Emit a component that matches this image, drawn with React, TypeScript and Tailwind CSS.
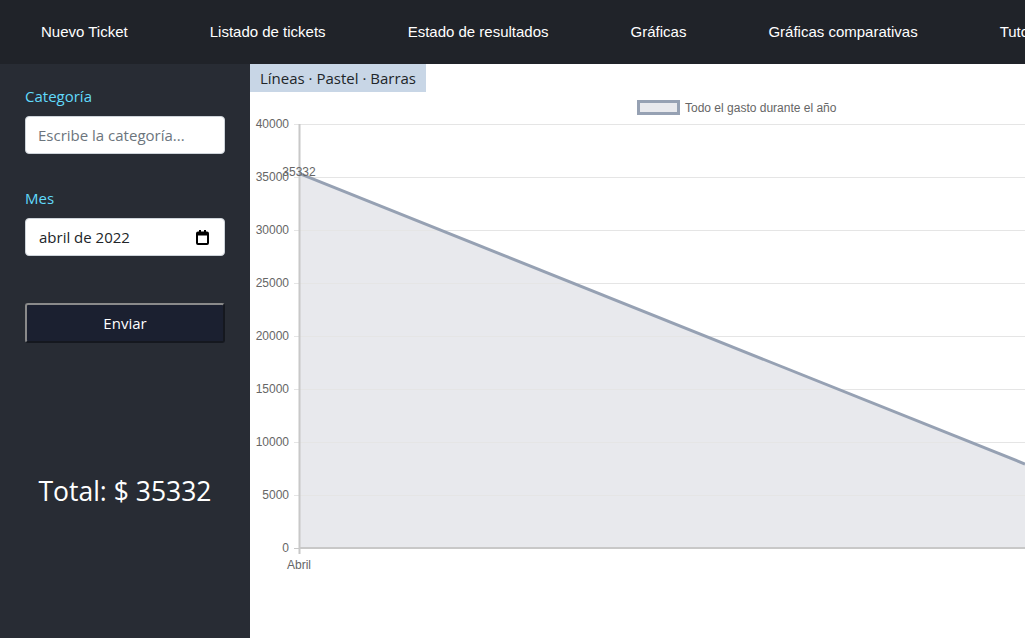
import React from "react";

const navItems = [
  "Nuevo Ticket",
  "Listado de tickets",
  "Estado de resultados",
  "Gráficas",
  "Gráficas comparativas",
  "Tutoriales",
];

function Chart() {
  const x0 = 49;
  const yTop = 32;
  const yBottom = 456;
  const ticks = [40000, 35000, 30000, 25000, 20000, 15000, 10000, 5000, 0];
  const yOf = (v: number) => yBottom - (v / 40000) * (yBottom - yTop);
  const p1y = yOf(35332);
  const p2x = 775;
  const p2y = 372;
  return (
    <svg width="775" height="546" className="block" style={{ fontFamily: '"Liberation Sans", Arial, sans-serif' }}>
      <rect x="388.5" y="9.5" width="40" height="12" fill="#e8e9ed" stroke="#96a1b3" strokeWidth="3" />
      <text x="435" y="19.5" fontSize="12" fill="#666">Todo el gasto durante el año</text>
      <polygon points={`${x0},${p1y} ${p2x},${p2y} ${p2x},${yBottom} ${x0},${yBottom}`} fill="#e8e9ed" />
      {ticks.map((t) => (
        <g key={t}>
          <line x1={x0 - 5} x2={775} y1={yOf(t) + 0.5} y2={yOf(t) + 0.5} stroke={t === 0 ? "#c8c8c8" : "#e5e5e5"} strokeWidth="1" />
          <text x={x0 - 10} y={yOf(t) + 4} fontSize="12" fill="#666" textAnchor="end">{t}</text>
        </g>
      ))}
      <line x1={x0 + 0.5} x2={x0 + 0.5} y1={yTop} y2={yBottom + 6} stroke="#c8c8c8" strokeWidth="2" />
      <line x1={x0} x2={775} y1={yBottom} y2={yBottom} stroke="#c8c8c8" strokeWidth="2" />
      <line x1={x0} y1={p1y} x2={p2x} y2={p2y} stroke="#96a1b3" strokeWidth="3" />
      <text x={x0} y={p1y + 3} fontSize="12" fill="#666" textAnchor="middle">35332</text>
      <text x={x0} y={477} fontSize="12" fill="#666" textAnchor="middle">Abril</text>
    </svg>
  );
}

export default function App() {
  return (
    <div className="w-[1025px] h-[638px] overflow-hidden flex flex-col bg-white">
      <nav className="h-16 shrink-0 bg-[#202329] flex items-center whitespace-nowrap overflow-hidden" style={{ fontFamily: '"Liberation Sans", Arial, sans-serif' }}>
        {navItems.map((n) => (
          <a key={n} className="px-[41px] text-[15px] text-white shrink-0">{n}</a>
        ))}
      </nav>
      <div className="flex flex-1 min-h-0">
        <aside className="w-[250px] shrink-0 bg-[#282c34] px-[25px] pt-[21px] flex flex-col" style={{ fontFamily: '"Open Sans", "Noto Sans", sans-serif' }}>
          <label className="text-[#61dafb] text-[15px] leading-[22px]">Categoría</label>
          <div className="mt-[9px] h-[38px] w-[200px] bg-white rounded-[4px] border border-[#ced4da] flex items-center px-[12px] text-[15px] text-[#6c757d]">
            Escribe la categoría...
          </div>
          <label className="mt-[33px] text-[#61dafb] text-[15px] leading-[22px]">Mes</label>
          <div className="mt-[9px] h-[38px] w-[200px] bg-white rounded-[4px] border border-[#ced4da] flex items-center justify-between pl-[13px] pr-[15px] text-[15px] text-[#212529]">
            <span>abril de 2022</span>
            <svg width="13" height="15" viewBox="0 0 13 15">
              <rect x="1" y="2.5" width="11" height="11.5" rx="1" fill="none" stroke="#000" strokeWidth="2" />
              <rect x="1" y="2.5" width="11" height="3" fill="#000" />
              <rect x="3" y="0" width="2" height="3" fill="#000" />
              <rect x="8" y="0" width="2" height="3" fill="#000" />
            </svg>
          </div>
          <button className="mt-[47px] h-[40px] w-[200px] bg-[#1b2030] text-white text-[15px] rounded-[3px] border-2 border-t-[#8a8a8a] border-l-[#8a8a8a] border-b-[#15181f] border-r-[#15181f]">
            Enviar
          </button>
          <div className="mt-[128px] text-center text-white text-[26.5px] leading-[40px]">Total: $ 35332</div>
        </aside>
        <main className="flex-1 min-w-0 flex flex-col items-start overflow-hidden">
          <div className="h-[28px] bg-[#c8d6e6] px-[10px] flex items-center text-[15px] text-[#212529]" style={{ fontFamily: '"Open Sans", "Noto Sans", sans-serif' }}>
            Líneas · Pastel · Barras
          </div>
          <Chart />
        </main>
      </div>
    </div>
  );
}
